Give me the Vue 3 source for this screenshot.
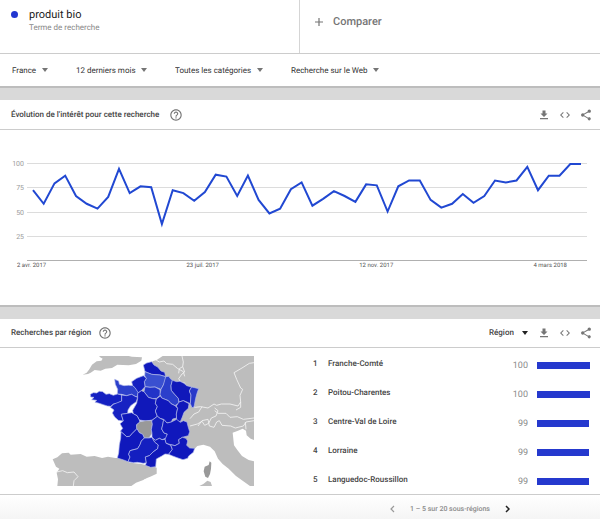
<script setup>
import { ref } from 'vue'

const filters = [
  { id: 'geo', label: 'Pays', value: 'France' },
  { id: 'time', label: 'Période', value: '12 derniers mois' },
  { id: 'cat', label: 'Catégorie', value: 'Toutes les catégories' },
  { id: 'prop', label: 'Type de recherche', value: 'Recherche sur le Web' },
]

const interest = [
  73, 59, 80, 88, 67, 59, 54, 66, 95, 70, 77, 76, 38, 73, 70, 62, 71, 89,
  87, 67, 88, 63, 49, 54, 74, 81, 57, 64, 72, 67, 61, 79, 78, 51, 77, 83,
  83, 63, 55, 59, 69, 60, 67, 83, 81, 83, 97, 73, 88, 88, 100, 100,
]
const plotWidth = 560
const firstX = 6
const step = 548 / (interest.length - 1)
const linePoints = interest
  .map((v, i) => `${(firstX + i * step).toFixed(1)},${(100 - v) * 0.97 + 2}`)
  .join(' ')
const ticks = [100, 75, 50, 25, 0]
const dates = ['2 avr. 2017', '23 juil. 2017', '12 nov. 2017', '4 mars 2018']

const rows = [
  { name: 'Franche-Comté', value: 100 },
  { name: 'Poitou-Charentes', value: 100 },
  { name: 'Centre-Val de Loire', value: 99 },
  { name: 'Lorraine', value: 99 },
  { name: 'Languedoc-Roussillon', value: 99 },
]
const level = ref('Région')

const regions = [
  { c: '#1019bd', p: '190,30 200,24 215,20 222,30 233,36 243,48 254,52 257,65 240,60 215,58 195,50' },
  { c: '#3a50d0', p: '195,50 215,58 240,60 257,65 256,77 250,90 243,103 225,96 210,97 195,95 193,80 199,70 194,62' },
  { c: '#1420c0', p: '155,80 170,70 190,62 199,70 193,80 195,95 184,107 173,115 165,100 158,92' },
  { c: '#2c40cc', p: '104,73 116,78 118,88 132,92 146,91 158,92 165,98 174,112 173,126 165,124 155,118 140,122 125,118 112,117 113,103 106,88' },
  { c: '#1420c2', p: '31,118 40,113 50,114 58,109 68,110 78,118 88,116 100,121 112,117 125,120 125,138 112,145 100,147 92,154 82,153 70,149 55,144 45,142 50,136 35,134 42,127 32,126' },
  { c: '#1722c2', p: '125,120 140,122 155,118 165,124 173,127 169,140 152,152 144,165 143,175 124,178 130,198 115,196 104,186 97,174 102,165 91,157 100,148 125,138' },
  { c: '#2234c8', p: '195,95 210,97 225,96 240,104 241,120 230,130 218,131 205,127 192,110' },
  { c: '#2b3fcb', p: '257,65 267,64 270,70 277,76 273,92 274,106 284,118 295,130 297,144 285,152 273,146 265,137 245,129 240,118 243,103 250,90' },
  { c: '#1018ba', p: '277,76 290,80 300,79 312,85 320,92 335,96 328,108 333,120 331,146 318,140 310,137 297,141 295,130 284,118 274,106 273,92' },
  { c: '#2839c9', p: '335,96 344,98 356,101 351,115 347,130 342,156 336,158 331,146 333,120 328,108' },
  { c: '#1018ba', p: '173,115 184,107 192,110 205,127 218,131 229,132 226,145 232,155 226,168 232,184 217,195 198,198 178,195 171,182 160,177 158,166 170,145 173,130' },
  { c: '#1018bc', p: '229,132 241,123 245,129 265,137 273,146 285,152 293,160 289,177 290,189 278,192 274,201 261,204 251,193 240,190 232,184 226,168 232,155 226,145' },
  { c: '#1018ba', p: '297,141 310,137 327,146 325,160 312,172 307,186 301,200 290,197 289,177 293,160 289,153' },
  { c: '#1018ba', p: '124,178 143,175 155,173 165,179 171,182 178,195 180,202 170,209 171,221 157,235 149,244 140,245 132,238 121,229 128,220 120,206 130,198' },
  { c: '#999999', p: '180,200 198,197 215,197 217,208 214,224 216,235 207,249 193,249 188,238 178,233 170,221 170,209' },
  { c: '#1420be', p: '215,197 232,184 240,190 251,195 248,210 245,222 252,234 262,237 259,249 246,254 238,250 226,256 216,247 216,235 214,224 217,208' },
  { c: '#1018bc', p: '251,193 261,204 274,201 290,193 301,202 310,197 321,201 324,214 329,230 325,242 307,247 296,254 298,265 285,272 272,269 258,265 255,253 262,237 252,234 245,222 248,210' },
  { c: '#1018bc', p: '123,230 132,238 140,245 149,244 157,235 171,221 178,233 188,238 193,249 184,258 180,269 173,281 160,284 150,287 146,298 150,306 144,320 131,315 112,309 116,294 118,270 122,250' },
  { c: '#141fc0', p: '193,249 207,249 216,247 224,261 235,270 233,281 219,291 208,302 196,306 199,323 190,325 172,322 160,323 144,320 150,306 146,298 150,287 173,281 180,269 184,258' },
  { c: '#1018ba', p: '216,247 226,256 238,250 246,254 255,253 258,265 272,271 277,283 266,298 255,297 244,304 229,312 227,335 212,337 196,331 199,323 196,306 208,302 219,291 233,281 235,270 224,261' },
  { c: '#1018bc', p: '272,269 285,272 298,265 296,254 307,247 318,250 323,258 320,271 329,279 344,280 340,292 326,303 323,310 309,314 294,309 278,303 266,298 277,283' },
]

const borders = [
  'M318 24l10 6 14-3 8 8 18 2 14 12 18 10 4 14',
  'M396 12l4 18 -2 14 6 16-8 6 -10 14 6 10 14 4',
  'M398 44l-10 6-2 14',
  'M612 32l-14 2-22 14-24 14 8 20 12 26 6 4-8 18 2 20-8 12-24-6-26 0-14 4-8-4-18 12-22-4-16 2-10-4',
  'M456 164l-10 16-14 6-12 14',
  'M420 222l22-6 14-8 8 12 12-6 8-16 14-6 6-16-10-8',
  'M494 176l10 8 24 0 12 12 22-2 18 8 32-4',
  'M572 150l0 16-14 8',
  'M612 206l-24 4-8 12-24 6-14-6-26-2-8-14-8 4-8 16-14-4-4-20-18 4-12 16',
  'M586 210l2 22',
  'M20 360l18-4 14 6 20-2 12 14-12 12-2 16',
]
</script>

<template>
  <main class="page">
    <section class="card search">
      <div class="terms">
        <div class="term">
          <span class="dot"></span>
          <div>
            <h1>produit bio</h1>
            <p>Terme de recherche</p>
          </div>
        </div>
        <button class="compare" type="button">
          <svg width="8" height="8" viewBox="0 0 8 8"><path d="M4 0v8M0 4h8" stroke="#757575" stroke-width="1.2" /></svg>
          Comparer
        </button>
      </div>
      <div class="filters">
        <label v-for="f in filters" :key="f.id" class="drop">
          <select :aria-label="f.label"><option>{{ f.value }}</option></select>
          <span class="arrow"></span>
        </label>
      </div>
    </section>

    <section class="card trend">
      <header>
        <h2>Évolution de l'intérêt pour cette recherche</h2>
        <button class="icon" type="button" aria-label="Aide">
          <svg width="12" height="12" viewBox="1.5 1.5 21 21" fill="#757575"><path d="M11 18h2v-2h-2v2zm1-16C6.480 2 2 6.480 2 12s4.480 10 10 10 10-4.480 10-10S17.520 2 12 2zm0 18c-4.410 0-8-3.590-8-8s3.590-8 8-8 8 3.590 8 8-3.590 8-8 8zm0-14c-2.210 0-4 1.790-4 4h2c0-1.100.9-2 2-2s2 .9 2 2c0 2-3 1.750-3 5h2c0-2.250 3-2.500 3-5 0-2.210-1.790-4-4-4z" /></svg>
        </button>
        <div class="actions">
          <button class="icon" type="button" aria-label="Télécharger"><svg width="12" height="12" viewBox="0 0 24 24" fill="#757575"><path d="M19 9h-4V3H9v6H5l7 7 7-7zM4 18v2.500h16V18z" /></svg></button>
          <button class="icon" type="button" aria-label="Intégrer"><svg width="12" height="12" viewBox="0 0 24 24" fill="#757575"><path d="M9.400 16.600 4.800 12l4.600-4.600L8 6l-6 6 6 6 1.400-1.400zm5.200 0 4.600-4.600-4.600-4.600L16 6l6 6-6 6-1.400-1.400z" /></svg></button>
          <button class="icon" type="button" aria-label="Partager"><svg width="12" height="12" viewBox="1 1 22 22" fill="#757575"><path d="M18 16.100c-.8 0-1.400.3-2 .8l-7.100-4.200c.1-.2.1-.5.1-.7s0-.5-.1-.7L16 7.200c.5.500 1.200.8 2 .8 1.700 0 3-1.300 3-3s-1.300-3-3-3-3 1.300-3 3c0 .2 0 .5.1.7L8 9.800C7.500 9.300 6.800 9 6 9c-1.700 0-3 1.300-3 3s1.300 3 3 3c.8 0 1.500-.3 2-.8l7.100 4.200c-.1.200-.1.400-.1.600 0 1.600 1.300 2.900 2.900 2.900s2.900-1.300 2.900-2.900-1.200-2.900-2.800-2.900z" /></svg></button>
        </div>
      </header>
      <div class="chart">
        <div class="ticks">
          <span v-for="t in ticks" :key="t">{{ t || '' }}</span>
        </div>
        <svg class="plot" :viewBox="`0 0 ${plotWidth} 101`" preserveAspectRatio="none">
          <g shape-rendering="crispEdges">
            <line v-for="t in ticks" :key="t" x1="0" :x2="plotWidth" :y1="Math.round((100 - t) * 0.97) + 1.5" :y2="Math.round((100 - t) * 0.97) + 1.5" :stroke="t ? '#dcdcdc' : '#b0b0b0'" />
          </g>
          <polyline :points="linePoints" fill="none" stroke="#2148d2" stroke-width="2" />
        </svg>
        <div class="dates">
          <span v-for="d in dates" :key="d">{{ d }}</span>
        </div>
      </div>
    </section>

    <section class="card geo">
      <header>
        <h2>Recherches par région</h2>
        <button class="icon" type="button" aria-label="Aide">
          <svg width="12" height="12" viewBox="1.5 1.5 21 21" fill="#757575"><path d="M11 18h2v-2h-2v2zm1-16C6.480 2 2 6.480 2 12s4.480 10 10 10 10-4.480 10-10S17.520 2 12 2zm0 18c-4.410 0-8-3.590-8-8s3.590-8 8-8 8 3.590 8 8-3.590 8-8 8zm0-14c-2.210 0-4 1.790-4 4h2c0-1.100.9-2 2-2s2 .9 2 2c0 2-3 1.750-3 5h2c0-2.250 3-2.500 3-5 0-2.210-1.790-4-4-4z" /></svg>
        </button>
        <div class="actions">
          <label class="drop level">
            <select v-model="level" aria-label="Niveau"><option>Région</option></select>
            <span class="arrow"></span>
          </label>
          <button class="icon" type="button" aria-label="Télécharger"><svg width="12" height="12" viewBox="0 0 24 24" fill="#757575"><path d="M19 9h-4V3H9v6H5l7 7 7-7zM4 18v2.500h16V18z" /></svg></button>
          <button class="icon" type="button" aria-label="Intégrer"><svg width="12" height="12" viewBox="0 0 24 24" fill="#757575"><path d="M9.400 16.600 4.800 12l4.600-4.600L8 6l-6 6 6 6 1.400-1.400zm5.200 0 4.600-4.600-4.600-4.600L16 6l6 6-6 6-1.400-1.400z" /></svg></button>
          <button class="icon" type="button" aria-label="Partager"><svg width="12" height="12" viewBox="1 1 22 22" fill="#757575"><path d="M18 16.100c-.8 0-1.400.3-2 .8l-7.100-4.200c.1-.2.1-.5.1-.7s0-.5-.1-.7L16 7.200c.5.500 1.200.8 2 .8 1.700 0 3-1.300 3-3s-1.300-3-3-3-3 1.300-3 3c0 .2 0 .5.1.7L8 9.800C7.500 9.300 6.800 9 6 9c-1.700 0-3 1.300-3 3s1.300 3 3 3c.8 0 1.500-.3 2-.8l7.100 4.200c-.1.200-.1.400-.1.600 0 1.600 1.300 2.900 2.900 2.900s2.900-1.300 2.900-2.900-1.200-2.900-2.800-2.900z" /></svg></button>
        </div>
      </header>
      <div class="split">
        <svg class="map" viewBox="0 12 612 390" role="img" aria-label="Carte de France">
          <g fill="#bdbdbd">
            <path d="M98 68l12-6 8-10 8-14 14-10 14-2 4-6-10-6 2-4H226l20 4 30 2-2 10-16 10-22 4-34-2-16 10-20 2-14 6-18-2-12 8-8 4z" />
            <path d="M300 40l8-12 12-4 18-12H612V402H600l-20-14-22-16-22-22-18-14-14-16-10-22-14-14-20-6-18 4-20 20-40 10-60-90-60-80z" />
            <path d="M8 322l14-6 14-12 20-2 6 6 30-2 18 8 24-2 22 6 18-4 22 4 24 0 20 14 34 4 26 6 22 6 0 14-22 8-20 14-22 8-14 10H22l2-20-4-20 8-12-10-6z" />
            <path d="M448 402l12-6 12-10 10 4 4 12z" />
          </g>
          <path fill="#fff" d="M548 242l16-6 14-6 10 6 2 14 12 10 10 4v64l-16-4-20-12-14-18-10-14z" />
          <path fill="#bdbdbd" d="M590 234l22-6v30l-14-4z" />
          <path fill="#fff" d="M310 352l10-36 90-10 30-16 10 50-60 62H262l18-12 26-12z" />
          <path fill="#bdbdbd" d="M290 335l30 12 0 18-16 8-20 8z" />
          <path fill="#999" d="M479 328l5 4-1 18-3 16-6 12-8-4-5-16 3-14 12-5z" />
          <g fill="none" stroke="#f4f4f4" stroke-width="2.500" stroke-linejoin="round">
            <path v-for="b in borders" :key="b" :d="b" />
          </g>
          <g transform="translate(90 9)" stroke="#b4bbec" stroke-width="2" stroke-linejoin="round">
            <polygon v-for="r in regions" :key="r.p" :points="r.p" :fill="r.c" />
          </g>
        </svg>
        <table>
          <tbody>
            <tr v-for="(r, i) in rows" :key="r.name">
              <td class="rank">{{ i + 1 }}</td>
              <td class="name">{{ r.name }}</td>
              <td class="value">{{ r.value }}</td>
              <td class="track"><div class="bar" :style="{ width: r.value + '%' }"></div></td>
            </tr>
          </tbody>
        </table>
      </div>
    </section>
    <footer>
      <nav>
        <button class="icon" type="button" aria-label="Précédent"><svg width="5" height="8" viewBox="0 0 5 8" fill="none" stroke="#9a9a9a" stroke-width="1.200"><path d="M4 1 1 4l3 3" /></svg></button>
        <span>1 – 5 sur 20 sous-régions</span>
        <button class="icon" type="button" aria-label="Suivant"><svg width="5" height="8" viewBox="0 0 5 8" fill="none" stroke="#222" stroke-width="1.500"><path d="m1 1 3 3-3 3" /></svg></button>
      </nav>
    </footer>
  </main>
</template>

<style>
body { margin: 0; background: #fff; }
</style>

<style scoped>
.page { font-family: Roboto, sans-serif; background: #d9d9d9; color: #444; font-size: 8px; text-rendering: geometricPrecision; }
.page * { box-sizing: border-box; }
h1, h2, p { margin: 0; font-weight: 400; }
button, select { font: inherit; color: inherit; text-rendering: inherit; border: 0; background: none; padding: 0; margin: 0; }
.icon { display: flex; }
.card { background: #fff; border-bottom: 2px solid #bdbdbd; margin-bottom: 12px; }
.terms { display: grid; grid-template-columns: 1fr 1fr; border-bottom: 1px solid #ccc; }
.term { display: flex; gap: 11px; padding: 7px 11px 19px; border-right: 1px solid #d5d5d5; }
.dot { width: 7px; height: 7px; margin-top: 4px; border-radius: 50%; background: #2236d0; }
h1 { font-size: 11px; line-height: 15px; color: #212121; }
p { line-height: 12px; color: #8a8a8a; }
.compare { display: flex; align-items: center; gap: 10px; padding: 0 15px 10px; font-size: 11px; font-weight: 500; color: #757575; }
.filters { display: flex; gap: 28px; height: 32px; align-items: center; padding-left: 12px; }
.drop { display: inline-grid; align-items: center; color: #333; }
.drop > * { grid-area: 1 / 1; }
.drop select { appearance: none; padding-right: 11px; outline: none; }
.arrow { justify-self: end; border: 3px solid transparent; border-top: 4px solid #757575; border-bottom: 0; pointer-events: none; }
.drop.level { font-weight: 500; color: #444; margin-right: 1px; }
.level select { padding-right: 14px; }
.level .arrow { border-top-color: #222; }
header { display: flex; align-items: center; gap: 11px; height: 30px; padding: 0 8px 0 11px; border-bottom: 1px solid #ccc; }
.geo header { gap: 8px; height: 29px; padding-bottom: 1px; }
h2 { font-size: 8px; font-weight: 500; }
.actions { display: flex; align-items: center; gap: 9px; margin-left: auto; }
.chart { display: grid; grid-template-columns: 27px 1fr; padding: 32px 13px 34px 0; }
.ticks { display: flex; flex-direction: column; justify-content: space-between; height: 107px; margin-top: -3px; padding-right: 3px; text-align: right; font-size: 7px; line-height: 10px; color: #9a9a9a; }
.ticks span { height: 10px; }
.plot { width: 100%; height: 101px; overflow: visible; }
.dates { grid-column: 1 / 3; display: flex; justify-content: space-between; padding: 0 20px 0 17px; margin-top: -5px; font-size: 6px; line-height: 10px; color: #555; }
.geo { margin: 0; border-bottom: 1px solid #ccc; }
.split { display: grid; grid-template-columns: 1fr 1fr; height: 146px; }
.map { width: 68%; justify-self: center; margin: 8px 0 0 4px; align-self: start; }
table { width: 100%; height: 145px; align-self: end; border-collapse: collapse; font-weight: 500; }
td { padding: 0; }
.rank { width: 28px; padding-left: 13px; }
.value { width: 40px; text-align: right; padding: 4px 9px 0 0; font-size: 9px; font-weight: 400; color: #8a8a8a; }
.track { width: 63px; padding: 4px 10px 0 0; }
.bar { height: 7px; background: #2539ce; }
footer { display: grid; grid-template-columns: 1fr 1fr; background: linear-gradient(#fff, #f3f3f3); }
nav { grid-column: 2; display: flex; align-items: center; justify-content: center; gap: 15px; height: 28px; font-size: 7px; font-weight: 500; color: #8a8a8a; }
</style>
